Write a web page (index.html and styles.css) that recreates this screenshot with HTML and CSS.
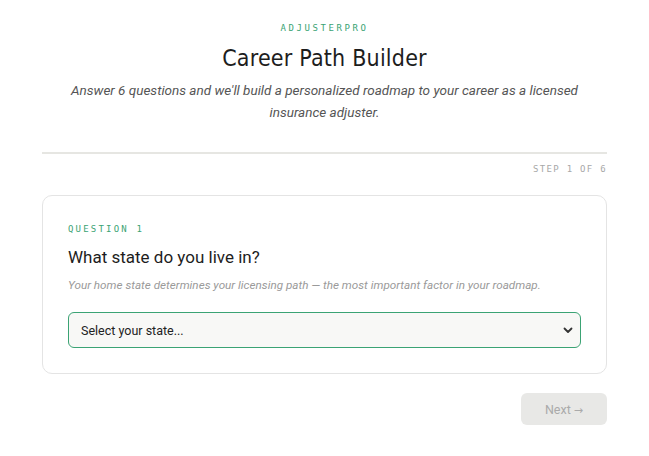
FILE: index.html
```html
<!DOCTYPE html>
<html lang="en">
<head>
    <meta charset="UTF-8">
    <meta name="viewport" content="width=device-width, initial-scale=1.0">
    <title>AdjusterPro - Career Path Builder</title>
    <link rel="stylesheet" href="styles.css">
</head>
<body>
    <div class="page-wrapper">
        <header class="intro">
            <div class="brand">AdjusterPro</div>
            <h1 class="intro-title">Career Path Builder</h1>
            <p class="intro-text">Answer 6 questions and we'll build a personalized roadmap to your career as a licensed insurance adjuster.</p>
        </header>

        <div class="progress">
            <div class="progress-track">
                <div class="progress-fill" style="width: 0%;"></div>
            </div>
            <div class="progress-label">Step 1 of 6</div>
        </div>

        <main class="question-card">
            <div class="question-number">Question 1</div>
            <h2 class="question-title">What state do you live in?</h2>
            <p class="question-hint">Your home state determines your licensing path — the most important factor in your roadmap.</p>
            <div class="select-wrap">
                <select class="state-select">
                    <option value="">Select your state...</option>
                    <option>Alabama</option>
                    <option>Alaska</option>
                    <option>Arizona</option>
                    <option>Texas</option>
                    <option>Florida</option>
                </select>
                <svg class="select-arrow" width="10" height="7" viewBox="0 0 10 7" aria-hidden="true">
                    <path d="M1.5 1.5 L5 5 L8.5 1.5" fill="none" stroke="#333" stroke-width="1.8" stroke-linecap="round" stroke-linejoin="round"/>
                </svg>
            </div>
        </main>

        <div class="actions">
            <button type="button" class="btn-next" disabled>Next <span class="arrow">→</span></button>
        </div>
    </div>
</body>
</html>
```

FILE: styles.css
```css
body {
    font-family: Roboto, "Liberation Sans", sans-serif;
    background-color: #fff;
    margin: 0;
    color: #222;
}

.page-wrapper {
    width: 565px;
    margin: 0 auto;
    padding-top: 22px;
}

/* Intro block */
.intro {
    text-align: center;
}
.brand {
    font-family: "DejaVu Sans Mono", "Liberation Mono", monospace;
    font-size: 9px;
    letter-spacing: 2.6px;
    text-transform: uppercase;
    color: #3ba374;
    line-height: 12px;
}
.intro-title {
    font-family: "DejaVu Sans Condensed", "DejaVu Sans", sans-serif;
    font-size: 23px;
    font-weight: 400;
    color: #1d1d1d;
    margin: 9px 0 0 0;
    line-height: 30px;
    letter-spacing: 0.2px;
}
.intro-text {
    font-size: 13.5px;
    font-style: italic;
    color: #555;
    line-height: 22px;
    margin: 6px auto 0 auto;
    max-width: 530px;
}

/* Progress */
.progress {
    margin-top: 29px;
}
.progress-track {
    height: 2px;
    background-color: #e6e6e2;
}
.progress-fill {
    height: 100%;
    background-color: #3ba374;
}
.progress-label {
    font-family: "DejaVu Sans Mono", "Liberation Mono", monospace;
    font-size: 9px;
    letter-spacing: 1.3px;
    text-transform: uppercase;
    color: #a8a8a8;
    text-align: right;
    margin-top: 9px;
    line-height: 12px;
}

/* Question card */
.question-card {
    margin-top: 20px;
    border: 1px solid #e4e4e4;
    border-radius: 10px;
    padding: 27px 25px 25px 25px;
}
.question-number {
    font-family: "DejaVu Sans Mono", "Liberation Mono", monospace;
    font-size: 9px;
    letter-spacing: 2.2px;
    text-transform: uppercase;
    color: #3ba374;
    line-height: 12px;
}
.question-title {
    font-size: 17px;
    font-weight: 400;
    color: #1d1d1d;
    margin: 11px 0 0 0;
    line-height: 22px;
}
.question-hint {
    font-size: 11.7px;
    font-style: italic;
    color: #9a9a9a;
    margin: 9px 0 0 0;
    line-height: 16px;
}

.select-wrap {
    position: relative;
    margin-top: 19px;
}
.state-select {
    appearance: none;
    -webkit-appearance: none;
    width: 100%;
    height: 36px;
    padding: 0 30px 0 12px;
    font-family: Roboto, "Liberation Sans", sans-serif;
    font-size: 12.5px;
    color: #222;
    background-color: #f8f8f6;
    border: 1px solid #3ba374;
    border-radius: 6px;
    box-sizing: border-box;
    outline: none;
}
.select-arrow {
    position: absolute;
    right: 8px;
    top: 15px;
    pointer-events: none;
}

/* Bottom actions */
.actions {
    display: flex;
    justify-content: flex-end;
    margin-top: 19px;
}
.btn-next {
    width: 86px;
    height: 32px;
    border: none;
    border-radius: 6px;
    background-color: #e8e8e6;
    color: #aaa;
    font-family: Roboto, "Liberation Sans", sans-serif;
    font-size: 12.5px;
    cursor: not-allowed;
}
.btn-next .arrow {
    font-family: "DejaVu Sans", sans-serif;
    font-size: 11px;
}
```
